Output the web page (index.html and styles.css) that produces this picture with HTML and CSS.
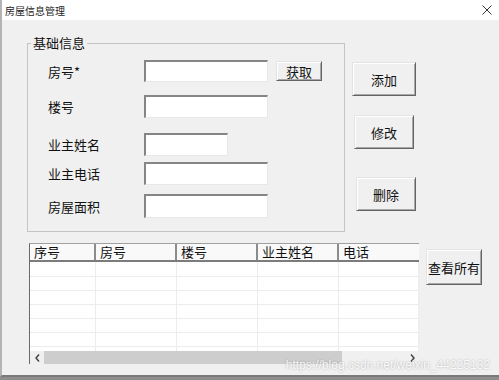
FILE: index.html
```html
<!DOCTYPE html>
<html lang="zh">
<head>
    <meta charset="UTF-8">
    <title>房屋信息管理</title>
    <link rel="stylesheet" href="styles.css">
</head>
<body>
    <div class="window">
        <div class="titlebar">
            <span class="title">房屋信息管理</span>
            <svg class="close" width="10" height="10" viewBox="0 0 10 10">
                <path d="M0.5 0.5 L9.5 9.5 M9.5 0.5 L0.5 9.5" stroke="#333" stroke-width="1" fill="none"/>
            </svg>
        </div>

        <div class="client">
            <div class="top">
                <fieldset class="group">
                    <legend>基础信息</legend>
                    <div class="row r1">
                        <label>房号*</label>
                        <input class="field" type="text">
                        <button class="btn btn-get">获取</button>
                    </div>
                    <div class="row r2">
                        <label>楼号</label>
                        <input class="field" type="text">
                    </div>
                    <div class="row r3">
                        <label>业主姓名</label>
                        <input class="field short" type="text">
                    </div>
                    <div class="row r4">
                        <label>业主电话</label>
                        <input class="field" type="text">
                    </div>
                    <div class="row r5">
                        <label>房屋面积</label>
                        <input class="field" type="text">
                    </div>
                </fieldset>

                <div class="actions">
                    <button class="btn btn-add">添加</button>
                    <button class="btn btn-edit">修改</button>
                    <button class="btn btn-del">删除</button>
                </div>
            </div>

            <div class="bottom">
                <div class="grid">
                    <div class="grid-head">
                        <div class="hcell">序号</div>
                        <div class="hcell">房号</div>
                        <div class="hcell">楼号</div>
                        <div class="hcell">业主姓名</div>
                        <div class="hcell">电话</div>
                    </div>
                    <div class="grid-body">
                        <div class="grow first"><div></div><div></div><div></div><div></div><div></div></div>
                        <div class="grow"><div></div><div></div><div></div><div></div><div></div></div>
                        <div class="grow"><div></div><div></div><div></div><div></div><div></div></div>
                        <div class="grow"><div></div><div></div><div></div><div></div><div></div></div>
                        <div class="grow"><div></div><div></div><div></div><div></div><div></div></div>
                        <div class="grow"><div></div><div></div><div></div><div></div><div></div></div>
                        <div class="grow"><div></div><div></div><div></div><div></div><div></div></div>
                    </div>
                    <div class="hscroll">
                        <div class="arrow">
                            <svg width="5" height="8" viewBox="0 0 5 8"><path d="M4 0.5 L1 4 L4 7.5" stroke="#404040" stroke-width="1.4" fill="none"/></svg>
                        </div>
                        <div class="thumb"></div>
                        <div class="track"></div>
                        <div class="arrow">
                            <svg width="5" height="8" viewBox="0 0 5 8"><path d="M1 0.5 L4 4 L1 7.5" stroke="#404040" stroke-width="1.4" fill="none"/></svg>
                        </div>
                    </div>
                </div>
                <button class="btn btn-all">查看所有</button>
            </div>

            <div class="watermark">https://blog.csdn.net/weixin_44225132</div>
        </div>
    </div>
</body>
</html>
```

FILE: styles.css
```css
* {
    box-sizing: border-box;
}

html, body {
    margin: 0;
}

body {
    width: 499px;
    height: 380px;
    overflow: hidden;
    background: #8e8e8e;
    font-family: "Noto Sans CJK SC", "Noto Sans", sans-serif;
    font-size: 13px;
    color: #111;
}

.window {
    position: relative;
    height: 377px;
    display: flex;
    flex-direction: column;
    background: #f0f0f0;
    border-left: 2px solid #b4b4b4;
    border-bottom: 2px solid #7a7a7a;
}

/* title bar */

.titlebar {
    height: 20px;
    background: #fff;
    display: flex;
    align-items: center;
    justify-content: space-between;
    padding: 0 7px 0 3px;
}

.title {
    font-size: 10px;
    color: #222;
}

/* client area */

.client {
    flex: 1;
    position: relative;
}

.top {
    display: flex;
    align-items: flex-start;
    padding: 15px 0 0 25px;
}

.group {
    margin: 0;
    padding: 0 0 13px 0;
    width: 318px;
    border: 1px solid #c4c4c4;
}

.group legend {
    margin-left: 3px;
    padding: 0 2px;
    line-height: 16px;
    font-size: 13px;
}

.row {
    display: flex;
    align-items: center;
    height: 23px;
    padding-left: 20px;
}

.row label {
    width: 96px;
}

.r1 { margin-top: 9px; height: 22px; }
.r2 { margin-top: 13px; }
.r3 { margin-top: 15px; }
.r4 { margin-top: 6px; }
.r5 { margin-top: 9px; height: 24px; }

.field {
    width: 124px;
    height: 100%;
    margin: 0;
    padding: 0 3px;
    background: #fff;
    border-top: 2px solid #858585;
    border-left: 2px solid #858585;
    border-right: 1px solid #e8e8e8;
    border-bottom: 1px solid #e8e8e8;
    outline: none;
}

.field.short {
    width: 84px;
}

/* buttons */

.btn {
    margin: 0;
    padding: 0;
    font-family: inherit;
    font-size: 13px;
    color: #111;
    background: #f0f0f0;
    border: 1px solid;
    border-color: #e4e4e4 #646464 #646464 #e4e4e4;
    box-shadow: inset 1px 1px #fff, inset -1px -1px #a8a8a8;
}

.btn-get {
    margin-left: 8px;
    width: 46px;
    height: 20px;
}

.actions {
    display: flex;
    flex-direction: column;
    align-items: flex-start;
    margin-left: 7px;
}

.btn-add {
    margin-top: 27px;
    width: 64px;
    height: 34px;
}

.btn-edit {
    margin-top: 19px;
    margin-left: 2px;
    width: 60px;
    height: 34px;
}

.btn-del {
    margin-top: 28px;
    margin-left: 4px;
    width: 60px;
    height: 34px;
}

/* list */

.bottom {
    display: flex;
    align-items: flex-start;
    margin-top: 11px;
    padding-left: 27px;
}

.grid {
    width: 390px;
    height: 121px;
    display: flex;
    flex-direction: column;
    background: #fff;
    border-left: 1px solid #6a6a6a;
    border-top: 1px solid #a0a0a0;
}

.grid-head {
    display: grid;
    grid-template-columns: 66px 81px 81px 81px 80px;
    height: 18px;
    background: #f9f9f9;
    border-bottom: 2px solid #7c7c7c;
}

.hcell {
    padding-left: 4px;
    line-height: 16px;
    white-space: nowrap;
    border-right: 2px solid #8c8c8c;
}

.hcell:last-child {
    border-right: none;
}

.grid-body {
    flex: 1;
    overflow: hidden;
}

.grow {
    display: grid;
    grid-template-columns: 66px 81px 81px 81px 80px;
    height: 14px;
    border-bottom: 1px solid #ececec;
}

.grow.first {
    height: 15px;
}

.grow div {
    border-right: 1px solid #ececec;
}

.hscroll {
    display: flex;
    height: 13px;
    background: #f0f0f0;
}

.arrow {
    width: 14px;
    display: flex;
    align-items: center;
    justify-content: center;
}

.thumb {
    width: 298px;
    background: #cdcdcd;
}

.track {
    flex: 1;
}

.btn-all {
    margin-left: 7px;
    margin-top: 6px;
    width: 56px;
    height: 36px;
}

.watermark {
    position: absolute;
    right: 9px;
    bottom: 3px;
    font-family: "Liberation Sans", sans-serif;
    font-size: 12px;
    color: rgba(255, 255, 255, 0.9);
    text-shadow: 0 0 2px rgba(0, 0, 0, 0.3);
}
```
